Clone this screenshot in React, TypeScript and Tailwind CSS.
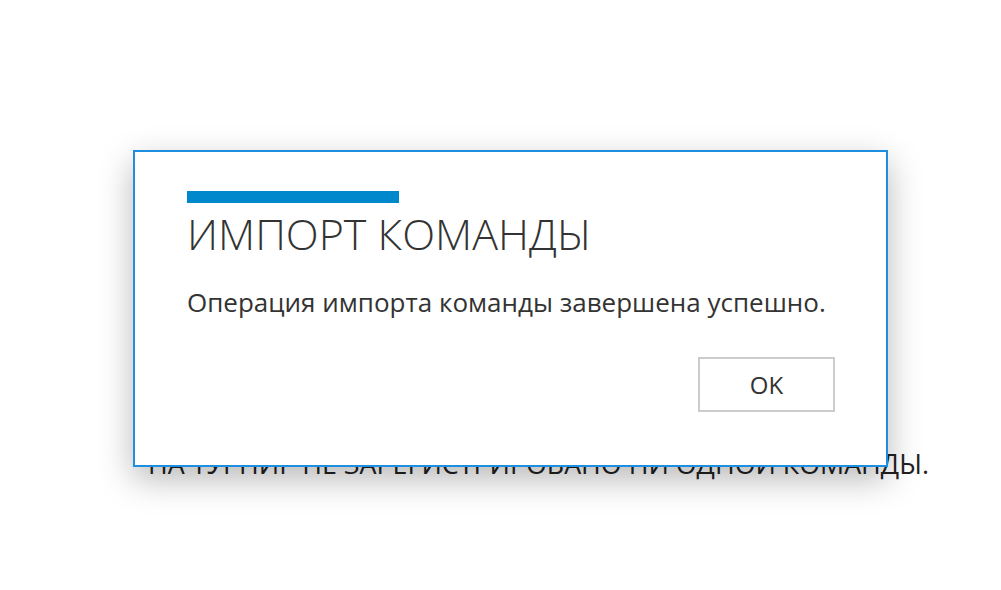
export default function App() {
  return (
    <div
      className="relative w-[1001px] h-[590px] bg-white overflow-hidden"
      style={{ fontFamily: '"Open Sans", "Noto Sans", sans-serif' }}
    >
      {/* страница под диалогом */}
      <div className="pt-[446px] pl-[148px]">
        <p className="text-[26.8px] leading-[36px] text-[#222] whitespace-nowrap">
          НА ТУРНИР НЕ ЗАРЕГИСТРИРОВАНО НИ ОДНОЙ КОМАНДЫ.
        </p>
      </div>

      {/* ДИАЛОГ */}
      <div className="absolute left-[133px] top-[150px] w-[755px] h-[317px] bg-white border-2 border-[#1d8fde] shadow-[0_12px_32px_rgba(0,0,0,0.28)] flex flex-col pl-[52px] pr-[51px] pt-[39px]">
        <div className="w-[212px] h-[12px] bg-[#0088cc]" />
        <h1 className="mt-[5px] text-[43px] leading-[52px] font-light text-[#333] whitespace-nowrap">
          ИМПОРТ КОМАНДЫ
        </h1>
        <p className="mt-[25px] text-[26px] leading-[34px] text-[#333] whitespace-nowrap">
          Операция импорта команды завершена успешно.
        </p>
        <div className="mt-[38px] flex justify-end">
          <button className="w-[137px] h-[55px] border-2 border-[#cccccc] bg-white text-[24px] text-[#333] flex items-center justify-center">
            OK
          </button>
        </div>
      </div>
    </div>
  );
}
